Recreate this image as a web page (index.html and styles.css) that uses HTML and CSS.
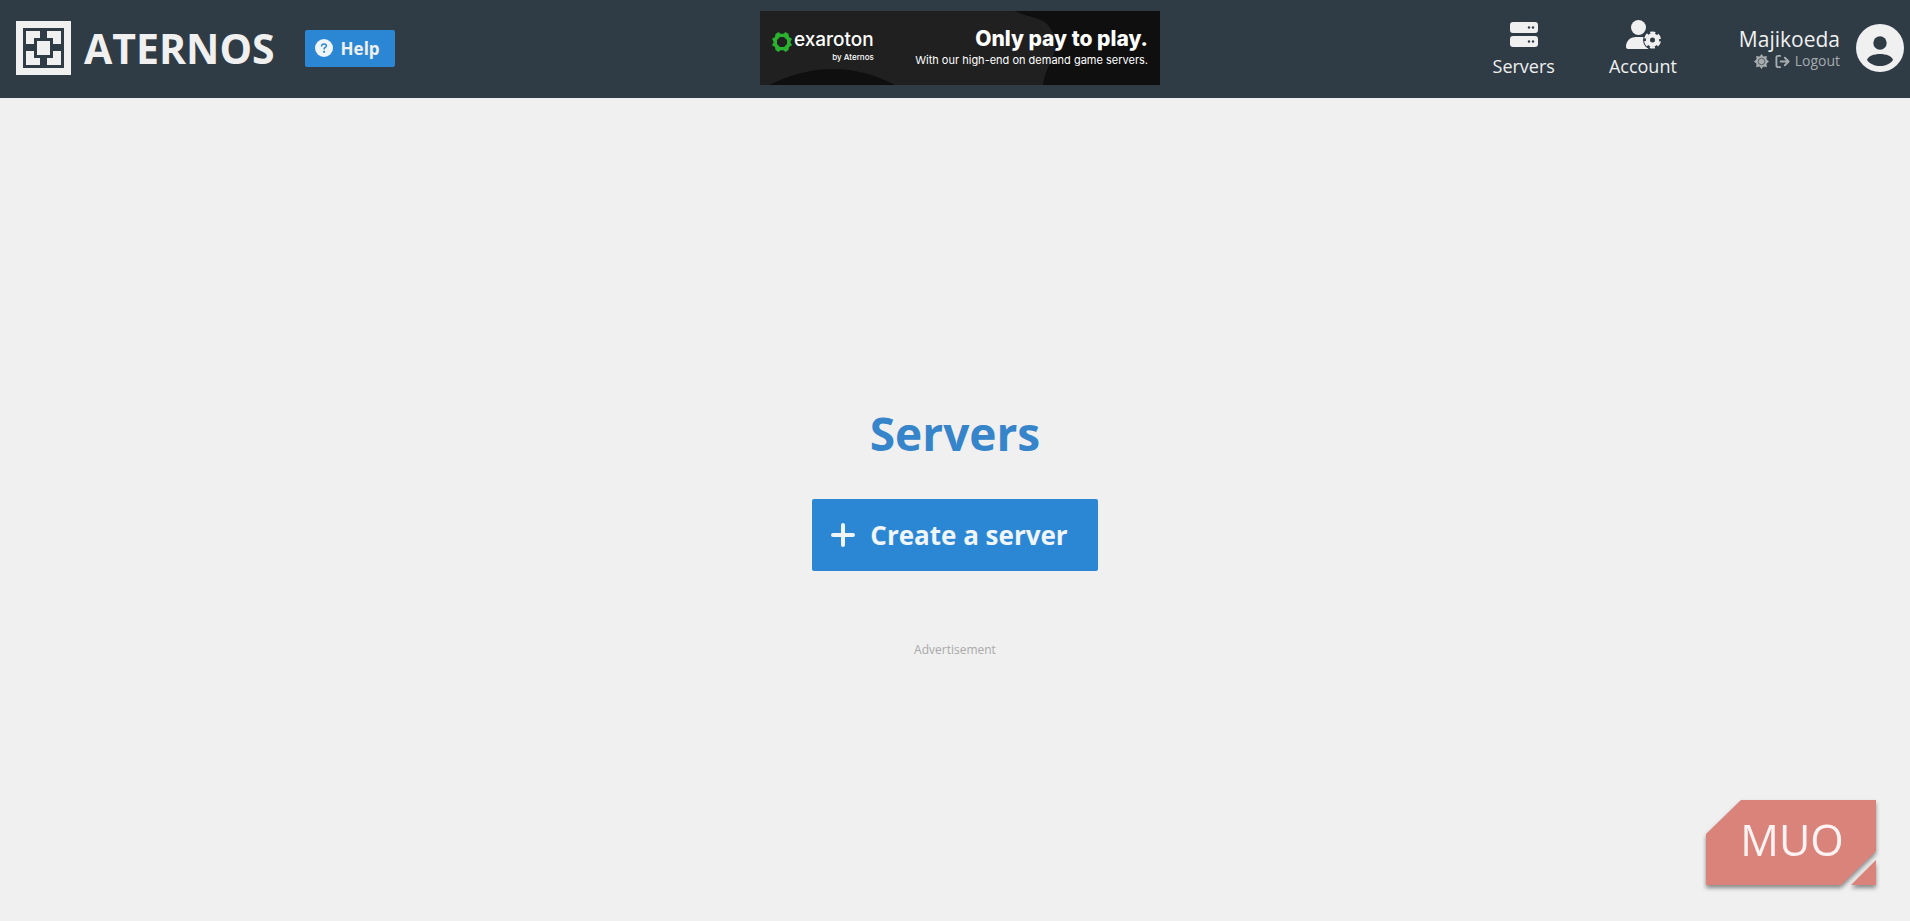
FILE: index.html
```html
<!DOCTYPE html>
<html lang="en">
<head>
<meta charset="utf-8">
<title>Servers | Aternos</title>
<meta name="viewport" content="width=device-width, initial-scale=1">
<link rel="stylesheet" href="styles.css">
</head>
<body>
<header class="header">
  <div class="header-left">
    <a class="brand" href="#">
      <svg class="brand-mark" viewBox="0 0 55 54" aria-hidden="true">
        <path fill="#f0f0f0" d="M0 0h55v54H0z"/>
        <path fill="#2f3b45" d="M7 7h41v40H7z"/>
        <path fill="#f0f0f0" d="M10 10h14v7h-6v6h-8zM31 10h14v13h-8v-6h-6zM10 30h8v7h6v7H10zM37 30h8v14H31v-7h6zM21 20h13v14H21z"/>
      </svg>
      <span class="brand-name">ATERNOS</span>
    </a>
    <a class="help" href="#">
      <svg class="help-icon" viewBox="0 0 18 18" aria-hidden="true">
        <circle cx="9" cy="9" r="9" fill="#f0f5fa"/>
        <path d="M6.6 6.9c.2-2.6 4.8-2.6 4.8 0 0 1.5-2.3 1.6-2.3 3.2" fill="none" stroke="#2b87d3" stroke-width="1.5" stroke-linecap="round"/>
        <circle cx="9.1" cy="12.8" r="1.1" fill="#2b87d3"/>
      </svg>
      <span>Help</span>
    </a>
  </div>

  <a class="banner" href="#">
    <svg class="banner-art" viewBox="0 0 400 74" preserveAspectRatio="none" aria-hidden="true">
      <path fill="#202020" d="M0 0h400v74H0z"/>
      <path fill="#0f0f0f" d="M255 0h145v74H283c2-14 8-22 11-32 3-11 0-22-8-30-8-6-20-6-31-12zM9 74c20-10 42-16 64-16s43 6 62 16z"/>
    </svg>
    <span class="banner-logo">
      <svg class="banner-mark" viewBox="0 0 20 20" aria-hidden="true">
        <path fill="#2bb130" fill-rule="evenodd" d="M6.500 0L8.500 1.800h3L13.500 0l3 2 .5 3 3 1.800-1.700 3.200L20 13.200 17 15l-.5 3-3 2-2-1.800h-3L6.500 20l-3-2L3 15 0 13.200 1.700 10 0 6.800 3 5l.5-3zM8 5L5 8v4l3 3h4l3-3V8l-3-3z"/>
      </svg>
      <span class="banner-names"><span class="banner-brand">exaroton</span><span class="banner-by">by Aternos</span></span>
    </span>
    <span class="banner-copy"><span class="banner-title">Only pay to play.</span><span class="banner-sub">With our high-end on demand game servers.</span></span>
  </a>

  <div class="header-right">
    <nav class="nav">
      <a class="nav-item" href="#">
        <svg class="nav-icon" viewBox="0 0 36 30" aria-hidden="true">
          <rect x="4" y="2" width="28" height="11" rx="3" fill="#f0f0f0"/>
          <rect x="4" y="16" width="28" height="11" rx="3" fill="#f0f0f0"/>
          <g fill="#2f3b45"><circle cx="23" cy="7.5" r="1.2"/><circle cx="27" cy="7.5" r="1.2"/><circle cx="23" cy="21.5" r="1.2"/><circle cx="27" cy="21.5" r="1.2"/></g>
        </svg>
        <span>Servers</span>
      </a>
      <a class="nav-item" href="#">
        <svg class="nav-icon" viewBox="0 0 36 30" aria-hidden="true">
          <circle cx="13.5" cy="7.5" r="7.5" fill="#f0f0f0"/>
          <path fill="#f0f0f0" d="M1 27c0-6 4-10 10-10h5c2 0 3 .3 4 1-2 3-1 8 4 11H3c-1 0-2-1-2-2z"/>
          <circle cx="27.5" cy="20" r="9.5" fill="#2f3b45"/>
          <circle cx="27.5" cy="20" r="4.6" fill="none" stroke="#f0f0f0" stroke-width="4.2"/>
          <circle cx="27.5" cy="20" r="7.4" fill="none" stroke="#f0f0f0" stroke-width="2.4" stroke-dasharray="5 2.75" stroke-dashoffset="-1.400"/>
        </svg>
        <span>Account</span>
      </a>
    </nav>
    <div class="user">
      <div class="user-text">
        <span class="user-name">Majikoeda</span>
        <div class="user-actions">
          <button class="theme" type="button" aria-label="Toggle theme">
            <svg class="small-icon" viewBox="0 0 16 16" aria-hidden="true">
              <path fill="#a6abae" d="M8 0l2 2.6L13.7 2l-.4 3.7L16 8l-2.7 2.3.4 3.7-3.7-.6L8 16l-2-2.6-3.7.6.4-3.7L0 8l2.7-2.3L2.3 2l3.700.6z"/>
              <circle cx="8" cy="8" r="3.5" fill="none" stroke="#2f3b45" stroke-width=".7"/>
            </svg>
          </button>
          <a class="logout" href="#">
            <svg class="small-icon" viewBox="0 0 16 16" aria-hidden="true">
              <path d="M5.5 2H3.3Q1.5 2 1.5 4v8q0 2 1.8 2h2.2M6 8h8M10.500 4L14.500 8l-4 4" fill="none" stroke="#a6abae" stroke-width="2" stroke-linecap="round" stroke-linejoin="round"/>
            </svg>
            <span>Logout</span>
          </a>
        </div>
      </div>
      <svg class="avatar" viewBox="0 0 48 48" role="img" aria-label="Majikoeda">
        <circle cx="24" cy="24" r="24" fill="#f0f0f0"/>
        <circle cx="24" cy="19" r="6.7" fill="#2f3b45"/>
        <path fill="#2f3b45" d="M11 36c1-4 7-6 13-6s12 2 13 6c-3 4-8 6-13 6s-10-2-13-6z"/>
      </svg>
    </div>
  </div>
</header>

<main class="main">
  <h1 class="title">Servers</h1>
  <button class="create" type="button">
    <svg class="plus" viewBox="0 0 24 24" aria-hidden="true"><path d="M12 2v20M2 12h20" stroke="#f0f5fa" stroke-width="4" stroke-linecap="round"/></svg>
    <span>Create a server</span>
  </button>
  <p class="ad-label">Advertisement</p>
</main>

<div class="watermark">
  <svg class="watermark-shape" viewBox="0 0 172 87" aria-hidden="true">
    <path fill="#d9837b" d="M35 0h135v51l-35 34H0V34zM170 60v25h-25z"/>
  </svg>
  <span class="watermark-text">MUO</span>
</div>
</body>
</html>
```
FILE: styles.css
```css
* { box-sizing: border-box; }

body {
  margin: 0;
  min-height: 100vh;
  display: flex;
  flex-direction: column;
  background: #f0f0f0;
  color: #f0f0f0;
  font-family: "Open Sans", "Noto Sans", sans-serif;
}

a { color: inherit; text-decoration: none; }
button { border: 0; padding: 0; background: none; color: inherit; font: inherit; cursor: pointer; }
svg { display: block; flex: none; }

.header {
  display: grid;
  grid-template-columns: 1fr 400px 1fr;
  align-items: center;
  height: 98px;
  padding: 0 6px 2px 16px;
  background: #2f3b45;
}

.header-left { display: flex; align-items: center; gap: 30px; }
.brand { display: flex; align-items: center; gap: 13px; }
.brand-mark { width: 55px; height: 54px; }
.brand-name { font-size: 41px; font-weight: 700; line-height: 54px; }

.help {
  display: flex;
  align-items: center;
  gap: 8px;
  height: 37px;
  padding: 0 15px 0 10px;
  border-radius: 2px;
  background: #2b87d3;
  font-size: 17px;
  font-weight: 700;
}
.help-icon { width: 18px; height: 18px; }

.banner {
  position: relative;
  display: flex;
  justify-content: space-between;
  height: 74px;
  padding: 16px 12px 0;
  color: #fff;
  font-family: Inter, "Open Sans", sans-serif;
}
.banner-art { position: absolute; inset: 0; width: 100%; height: 100%; }
.banner-logo { position: relative; display: flex; gap: 2px; }
.banner-mark { width: 20px; height: 20px; margin-top: 5px; }
.banner-names, .banner-copy { position: relative; display: flex; flex-direction: column; align-items: flex-end; white-space: nowrap; }
.banner-brand { font-size: 19px; font-weight: 500; line-height: 26px; }
.banner-by { font-size: 8px; font-weight: 500; line-height: 8px; }
.banner-title { font-size: 21px; font-weight: 800; line-height: 24px; }
.banner-sub { font-size: 11px; font-weight: 400; line-height: 18px; }

.header-right { display: flex; align-items: center; justify-content: flex-end; gap: 62px; }
.nav { display: flex; gap: 54px; padding-top: 2px; }
.nav-item { display: flex; flex-direction: column; align-items: center; gap: 4px; font-size: 18px; line-height: 24px; }
.nav-icon { width: 36px; height: 30px; }

.user { display: flex; align-items: center; gap: 16px; }
.user-text { display: flex; flex-direction: column; align-items: flex-end; }
.user-name { font-size: 21px; line-height: 26px; }
.user-actions { display: flex; align-items: center; gap: 6px; color: #a6abae; font-size: 14px; line-height: 18px; }
.logout { display: flex; align-items: center; gap: 5px; }
.small-icon { width: 15px; height: 15px; }
.avatar { width: 48px; height: 48px; }

.main {
  flex: 1;
  display: flex;
  flex-direction: column;
  align-items: center;
  justify-content: center;
  padding-top: 40px;
}
.title { margin: 0 0 34px; color: #3684ca; font-size: 46px; font-weight: 700; line-height: 64px; }
.create {
  display: flex;
  align-items: center;
  gap: 15px;
  height: 72px;
  padding: 0 30px 0 19px;
  border-radius: 2px;
  background: #2b87d3;
  color: #f0f5fa;
  font-size: 26px;
  font-weight: 700;
}
.plus { width: 24px; height: 24px; }
.ad-label { margin: 71px 0 0; color: #a9a9a9; font-size: 12px; line-height: 16px; }

.watermark {
  position: fixed;
  right: 32px;
  bottom: 34px;
  display: grid;
  place-items: center;
}
.watermark > * { grid-area: 1 / 1; }
.watermark-shape { width: 172px; height: 87px; overflow: visible; filter: drop-shadow(0 3px 2px #888); }
.watermark-text { position: relative; padding-bottom: 8px; color: #fdf3f2; font-size: 43px; font-weight: 400; line-height: 48px; }
```
